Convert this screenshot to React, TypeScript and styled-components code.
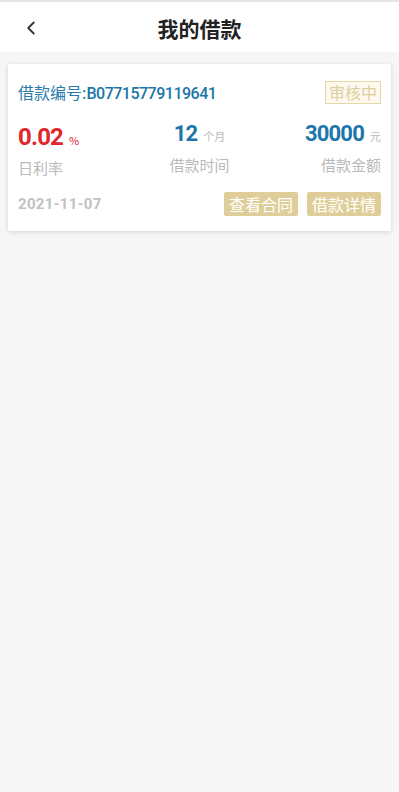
import React from 'react'
import styled, { createGlobalStyle } from 'styled-components'
import { ChevronLeft } from 'lucide-react'

const GlobalStyle = createGlobalStyle`
  html, body {
    margin: 0;
    padding: 0;
    background: #f6f6f6;
    font-family: Roboto, "Noto Sans CJK SC", sans-serif;
  }
`

const Page = styled.div`
  min-height: 792px;
  background: #f6f6f6;
  border-top: 2px solid #e6e6e6;
  box-sizing: border-box;
`

const Header = styled.header`
  height: 50px;
  padding-top: 2px;
  box-sizing: border-box;
  background: #fff;
  display: grid;
  grid-template-columns: 60px 1fr 60px;
  align-items: center;
`

const BackButton = styled.button`
  border: 0;
  background: none;
  padding: 0 0 0 20px;
  display: flex;
  align-items: center;
  color: #333;
`

const Title = styled.h1`
  margin: 0;
  text-align: center;
  font-size: 21px;
  font-weight: 700;
  color: #222;
  font-family: "Noto Sans CJK SC", sans-serif;
`

const List = styled.div`
  padding: 12px 8px;
`

const Card = styled.div`
  background: #fff;
  border-radius: 2px;
  box-shadow: 0 1px 5px rgba(0, 0, 0, 0.14);
  padding: 16px 10px 15px;
`

const TopRow = styled.div`
  display: flex;
  align-items: center;
  justify-content: space-between;
`

const LoanNo = styled.div`
  font-size: 16px;
  color: #2a7aab;
  font-family: "Noto Sans CJK SC", sans-serif;
`

const LoanCode = styled.span`
  font-family: Roboto, sans-serif;
  font-weight: 500;
  letter-spacing: -0.5px;
  color: #1c76a9;
`

const Status = styled.span`
  height: 23px;
  line-height: 21px;
  box-sizing: border-box;
  padding: 0 3px;
  border: 1px solid #e6d7a9;
  background: #fdf9ef;
  color: #e0cf9c;
  font-size: 16px;
  font-family: "Noto Sans CJK SC", sans-serif;
`

const Stats = styled.div`
  display: grid;
  grid-template-columns: 1fr 1fr 1fr;
  margin-top: 16px;
`

const Stat = styled.div<{ $align: 'left' | 'center' | 'right'; $offset?: number }>`
  text-align: ${({ $align }) => $align};
  margin-top: ${({ $offset }) => $offset || 0}px;
`

const Value = styled.span<{ $color: string; $size: number }>`
  font-size: ${({ $size }) => $size}px;
  font-weight: 700;
  line-height: 28px;
  letter-spacing: -0.8px;
  color: ${({ $color }) => $color};
`

const Unit = styled.span<{ $color: string }>`
  margin-left: 6px;
  font-size: 11px;
  color: ${({ $color }) => $color};
  font-family: "Noto Sans CJK SC", sans-serif;
`

const Label = styled.div`
  margin-top: 6px;
  font-size: 15px;
  color: #bababa;
  font-family: "Noto Sans CJK SC", sans-serif;
`

const BottomRow = styled.div`
  display: flex;
  align-items: center;
  justify-content: space-between;
  margin-top: 14px;
`

const DateText = styled.span`
  font-size: 15px;
  font-weight: 700;
  color: #c2c2c2;
  letter-spacing: 0.3px;
`

const Actions = styled.div`
  display: flex;
  gap: 9px;
`

const ActionButton = styled.button`
  height: 24px;
  padding: 0 5px;
  border: 0;
  border-radius: 2px;
  background: #dfce99;
  color: #fff;
  font-size: 16px;
  line-height: 24px;
  font-family: "Noto Sans CJK SC", sans-serif;
`

export default function App() {
  return (
    <>
      <GlobalStyle />
      <Page>
        <Header>
          <BackButton>
            <ChevronLeft size={22} strokeWidth={2} />
          </BackButton>
          <Title>我的借款</Title>
          <span />
        </Header>
        <List>
          <Card>
            <TopRow>
              <LoanNo>
                借款编号:<LoanCode>B07715779119641</LoanCode>
              </LoanNo>
              <Status>审核中</Status>
            </TopRow>
            <Stats>
              <Stat $align="left" $offset={3}>
                <Value $color="#e0262b" $size={24}>0.02</Value>
                <Unit $color="#e0262b">%</Unit>
                <Label>日利率</Label>
              </Stat>
              <Stat $align="center">
                <Value $color="#1c76a9" $size={22}>12</Value>
                <Unit $color="#bababa">个月</Unit>
                <Label>借款时间</Label>
              </Stat>
              <Stat $align="right">
                <Value $color="#1c76a9" $size={22}>30000</Value>
                <Unit $color="#bababa">元</Unit>
                <Label>借款金额</Label>
              </Stat>
            </Stats>
            <BottomRow>
              <DateText>2021-11-07</DateText>
              <Actions>
                <ActionButton>查看合同</ActionButton>
                <ActionButton>借款详情</ActionButton>
              </Actions>
            </BottomRow>
          </Card>
        </List>
      </Page>
    </>
  )
}
